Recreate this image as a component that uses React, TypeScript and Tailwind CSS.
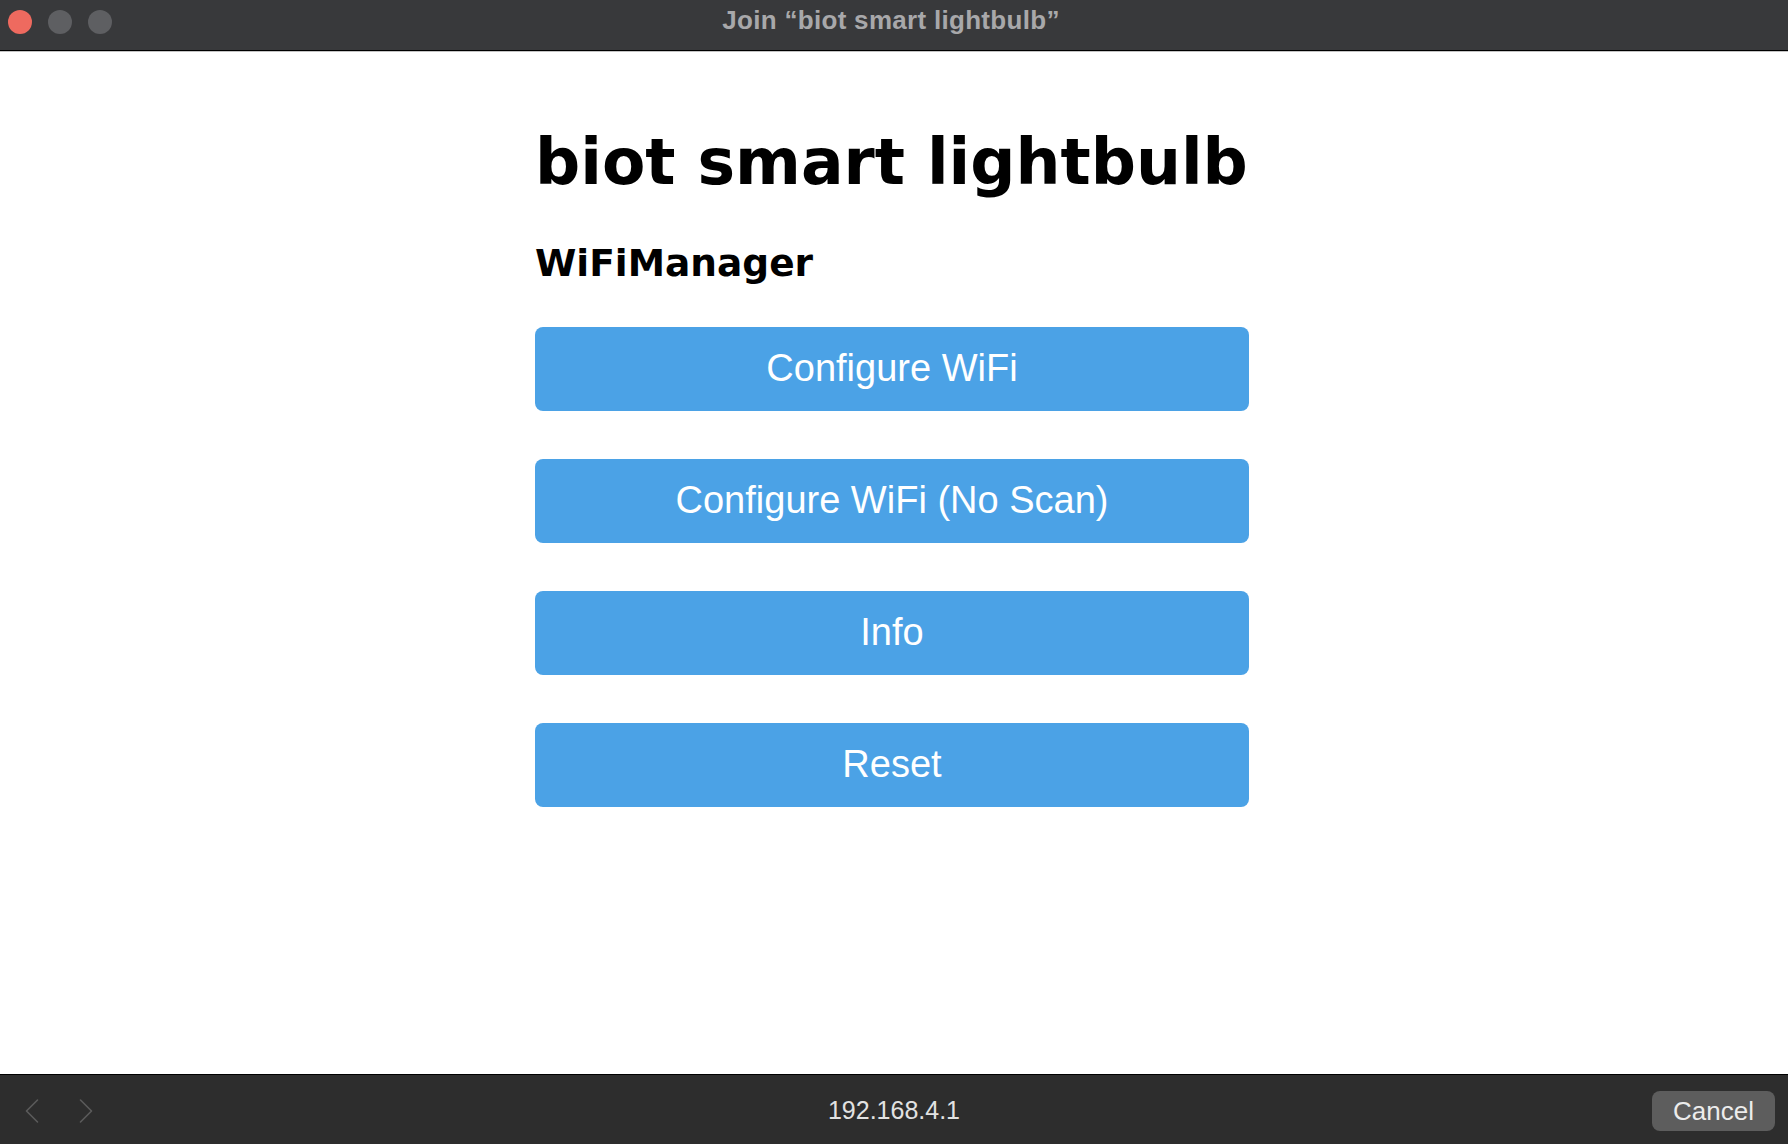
import React from 'react';

const buttons = ['Configure WiFi', 'Configure WiFi (No Scan)', 'Info', 'Reset'];

const Chevron: React.FC<{ dir: 'left' | 'right' }> = ({ dir }) => (
  <svg width="14" height="24" viewBox="0 0 14 24" fill="none">
    <polyline
      points={dir === 'left' ? '12.5,1 1.5,12 12.5,23' : '1.5,1 12.5,12 1.5,23'}
      stroke="#5b5b5b"
      strokeWidth="1.6"
      strokeLinecap="round"
      strokeLinejoin="round"
    />
  </svg>
);

const App: React.FC = () => {
  return (
    <div className="w-full h-screen flex flex-col bg-white overflow-hidden">
      {/* window chrome */}
      <div className="h-[50px] shrink-0 bg-[#38393b] grid grid-cols-[1fr_auto_1fr] items-start">
        <div className="flex gap-[16px] pl-[8px] pt-[10px]">
          <span className="w-[24px] h-[24px] rounded-full bg-[#ee6a5f]"></span>
          <span className="w-[24px] h-[24px] rounded-full bg-[#5e5f62]"></span>
          <span className="w-[24px] h-[24px] rounded-full bg-[#5e5f62]"></span>
        </div>
        <div className="pt-[5px] pr-[6px] text-[26px] leading-[30px] font-bold text-[#a8a8aa] font-['Liberation_Sans',sans-serif] tracking-[0.3px]">
          Join “biot smart lightbulb”
        </div>
        <div></div>
      </div>
      <div className="h-px bg-black shrink-0"></div>
      <div className="h-px bg-[#c4c4c4] shrink-0"></div>

      {/* portal page */}
      <main className="flex-1 bg-white flex justify-center pr-[4px]">
        <div className="w-[714px] pt-[79px] font-['DejaVu_Sans',Verdana,sans-serif]">
          <h1 className="text-[63.2px] leading-none font-bold text-black whitespace-nowrap">biot smart lightbulb</h1>
          <h3 className="mt-[51px] text-[37.5px] leading-none font-bold text-black">WiFiManager</h3>
          <div className="mt-[44px] flex flex-col gap-[47.5px]">
            {buttons.map(label => (
              <button
                key={label}
                className="h-[84.5px] w-full rounded-[8px] bg-[#4ba2e6] text-white text-[38px] font-['Liberation_Sans',Arial,sans-serif] flex items-center justify-center"
              >
                {label}
              </button>
            ))}
          </div>
        </div>
      </main>

      {/* bottom bar */}
      <div className="h-px bg-black shrink-0"></div>
      <div className="h-[69px] shrink-0 bg-[#2d2d2d] grid grid-cols-[1fr_auto_1fr] items-center font-['Liberation_Sans',Arial,sans-serif]">
        <div className="flex items-center gap-[40px] pl-[25px] pt-[2px]">
          <Chevron dir="left" />
          <Chevron dir="right" />
        </div>
        <div className="text-[25px] text-[#e2e2e2] pt-[3px]">192.168.4.1</div>
        <div className="flex justify-end pr-[13px] pt-[3px]">
          <button className="h-[40px] w-[123px] rounded-[8px] bg-[#5d5d5d] text-[26px] text-[#ececec] flex items-center justify-center">
            Cancel
          </button>
        </div>
      </div>
    </div>
  );
};

export default App;
